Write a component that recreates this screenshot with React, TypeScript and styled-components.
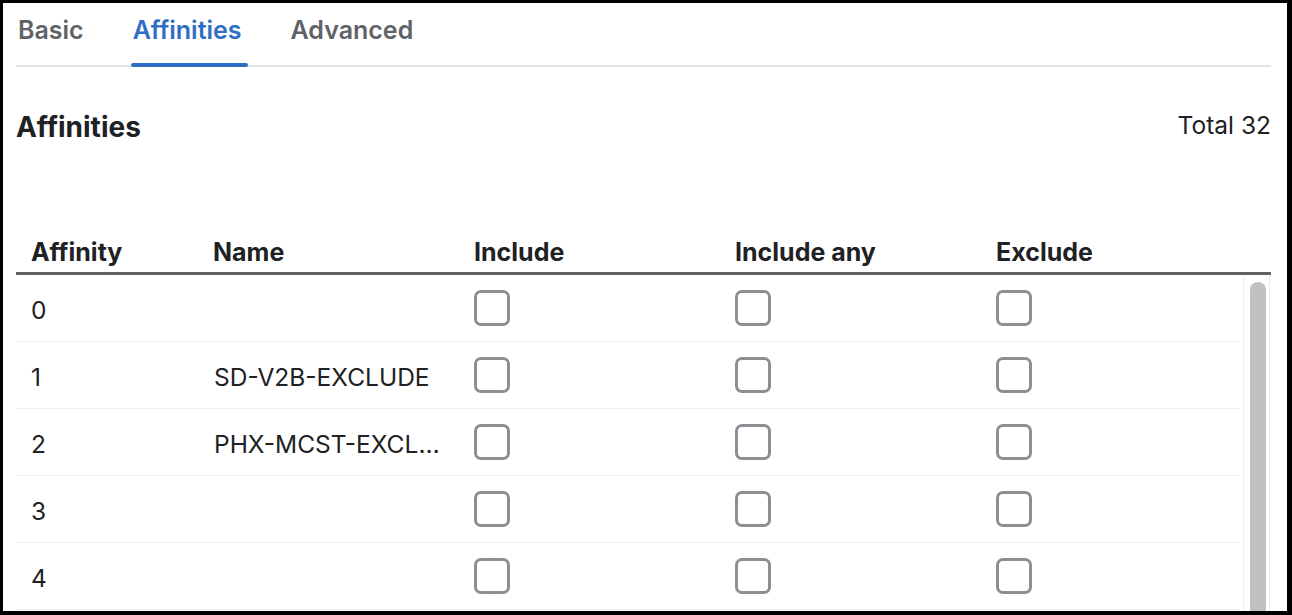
import React from "react";
import styled, { createGlobalStyle } from "styled-components";

const Global = createGlobalStyle`
  html, body { margin: 0; padding: 0; background: #ffffff; }
  body { font-family: Inter, "Noto Sans", Arial, sans-serif; color: #202124; }
  * { box-sizing: border-box; }
`;

const Frame = styled.div`
  width: 1292px;
  height: 615px;
  border-style: solid;
  border-color: #000;
  border-width: 3px 5px 4px 3px;
  overflow: hidden;
  background: #fff;
`;

const Content = styled.div`
  padding: 0 16px 0 13px;
  display: flex;
  flex-direction: column;
`;

const TabBar = styled.div`
  display: flex;
  gap: 44px;
  height: 64px;
  border-bottom: 2px solid #e3e3e3;
`;

const Tab = styled.div<{ $active?: boolean }>`
  position: relative;
  padding: 12px 3px 0 2px;
  font-size: 25px;
  font-weight: 600;
  line-height: 30px;
  color: ${(p) => (p.$active ? "#2f6ec4" : "#5f6368")};
  &::after {
    content: "";
    display: ${(p) => (p.$active ? "block" : "none")};
    position: absolute;
    left: 0;
    right: -3px;
    bottom: -2px;
    height: 4px;
    border-radius: 2px;
    background: #2f6ec4;
  }
`;

const SectionHead = styled.div`
  display: flex;
  justify-content: space-between;
  align-items: flex-start;
  height: 161px;
  padding-top: 43px;
`;

const Title = styled.h2`
  margin: 0;
  font-size: 28px;
  font-weight: 700;
  line-height: 34px;
  color: #202124;
`;

const Total = styled.div`
  font-size: 24.5px;
  line-height: 30px;
  color: #202124;
`;

const COLS = "180px 261px 261px 261px 261px 31px";

const HeaderRow = styled.div`
  display: grid;
  grid-template-columns: ${COLS};
  height: 47px;
  border-bottom: 3px solid #5f6368;
`;

const HeadCell = styled.div<{ $first?: boolean }>`
  padding: 9px 10px 0 ${(p) => (p.$first ? "15px" : "17px")};
  font-size: 25px;
  font-weight: 700;
  line-height: 30px;
  color: #202124;
  white-space: nowrap;
`;

const Body = styled.div`
  display: flex;
`;

const Rows = styled.div`
  width: 1224px;
  display: flex;
  flex-direction: column;
`;

const Row = styled.div`
  display: grid;
  grid-template-columns: 180px 261px 261px 261px 261px;
  height: 67px;
  border-bottom: 1px solid #efefef;
  align-items: center;
`;

const Cell = styled.div<{ $text?: boolean }>`
  padding: ${(p) => (p.$text ? "4px" : "0")} 16px 0 15px;
  font-size: 24.5px;
  line-height: 30px;
  color: #202124;
  white-space: nowrap;
  overflow: hidden;
  text-overflow: ellipsis;
`;

const NameCell = styled(Cell)`
  padding-left: 18px;
  padding-right: 14px;
`;

const Box = styled.span`
  display: block;
  width: 36px;
  height: 36px;
  margin-left: 2px;
  border: 3px solid #8b8e93;
  border-radius: 7px;
  background: #fff;
`;

const Track = styled.div`
  width: 27px;
  margin-left: 3px;
  border-left: 1px solid #ededed;
  border-right: 1px solid #ededed;
  padding: 7px 0 0 6px;
`;

const Thumb = styled.div`
  width: 16px;
  height: 420px;
  border-radius: 8px;
  background: #c1c1c1;
`;

const rows = [
  { id: 0, name: "" },
  { id: 1, name: "SD-V2B-EXCLUDE" },
  { id: 2, name: "PHX-MCST-EXCLUDE" },
  { id: 3, name: "" },
  { id: 4, name: "" },
];

export default function App() {
  return (
    <>
      <Global />
      <Frame>
        <Content>
          <TabBar>
            <Tab>Basic</Tab>
            <Tab $active>Affinities</Tab>
            <Tab>Advanced</Tab>
          </TabBar>
          <SectionHead>
            <Title>Affinities</Title>
            <Total>Total 32</Total>
          </SectionHead>
          <HeaderRow>
            <HeadCell $first>Affinity</HeadCell>
            <HeadCell>Name</HeadCell>
            <HeadCell>Include</HeadCell>
            <HeadCell>Include any</HeadCell>
            <HeadCell>Exclude</HeadCell>
            <HeadCell />
          </HeaderRow>
          <Body>
            <Rows>
              {rows.map((r) => (
                <Row key={r.id}>
                  <Cell $text>{r.id}</Cell>
                  <NameCell $text title={r.name}>{r.name}</NameCell>
                  <Cell><Box /></Cell>
                  <Cell><Box /></Cell>
                  <Cell><Box /></Cell>
                </Row>
              ))}
            </Rows>
            <Track>
              <Thumb />
            </Track>
          </Body>
        </Content>
      </Frame>
    </>
  );
}
